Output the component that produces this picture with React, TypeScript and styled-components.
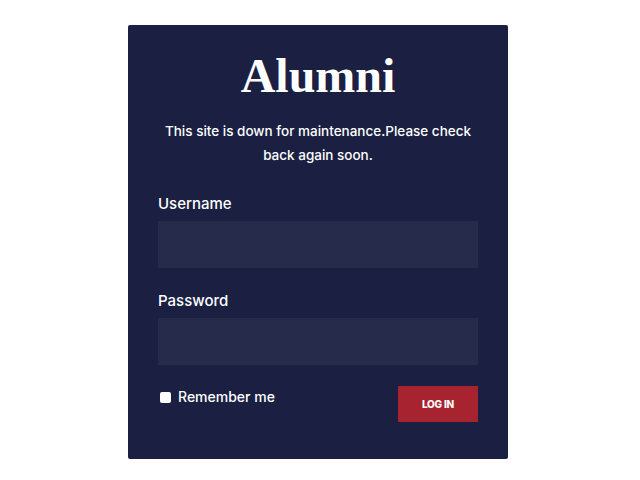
import React from "react";
import styled, { createGlobalStyle } from "styled-components";

const Global = createGlobalStyle`
  html, body { margin: 0; padding: 0; background: #ffffff; }
  body { font-family: Inter, "Liberation Sans", sans-serif; }
  * { box-sizing: border-box; }
`;

const Page = styled.div`
  display: flex;
  justify-content: center;
  padding: 25px 4px 0 0;
`;

const Card = styled.div`
  width: 380px;
  background: #1b2043;
  border-radius: 2px;
  padding: 23px 30px 37px;
  display: flex;
  flex-direction: column;
  color: #ffffff;
`;

const Title = styled.h1`
  margin: 0;
  font-family: "Liberation Serif", "Times New Roman", serif;
  font-weight: 700;
  font-size: 48px;
  line-height: 56px;
  text-align: center;
`;

const Notice = styled.p`
  margin: 15px 0 0;
  font-size: 13.5px;
  font-weight: 500;
  line-height: 24px;
  text-align: center;
  color: #ffffff;
`;

const Field = styled.div<{ $top: number }>`
  display: flex;
  flex-direction: column;
  gap: 7px;
  margin-top: ${(p) => p.$top}px;
`;

const Label = styled.label`
  font-size: 15px;
  line-height: 20px;
  font-weight: 500;
`;

const Input = styled.input`
  height: 47px;
  width: 100%;
  border: none;
  outline: none;
  background: #262a4b;
  color: #fff;
  padding: 0 12px;
  font-size: 14px;
`;

const Row = styled.div`
  display: flex;
  justify-content: space-between;
  align-items: flex-start;
  margin-top: 21px;
`;

const Remember = styled.label`
  display: flex;
  align-items: center;
  gap: 7px;
  font-size: 14px;
  font-weight: 500;
  line-height: 22px;
  padding-left: 2px;
`;

const Box = styled.span`
  width: 11px;
  height: 11px;
  border-radius: 2px;
  background: #ffffff;
`;

const Button = styled.button`
  width: 80px;
  height: 36px;
  border: none;
  background: #a6232f;
  color: #ffffff;
  font-family: Inter, "Liberation Sans", sans-serif;
  font-weight: 800;
  font-size: 10px;
  letter-spacing: -0.2px;
  text-transform: uppercase;
`;

export default function App() {
  return (
    <>
      <Global />
      <Page>
        <Card>
          <Title>Alumni</Title>
          <Notice>
            This site is down for maintenance.Please check
            <br />
            back again soon.
          </Notice>
          <Field $top={27}>
            <Label>Username</Label>
            <Input type="text" />
          </Field>
          <Field $top={23}>
            <Label>Password</Label>
            <Input type="password" />
          </Field>
          <Row>
            <Remember>
              <Box />
              Remember me
            </Remember>
            <Button>Log In</Button>
          </Row>
        </Card>
      </Page>
    </>
  );
}
